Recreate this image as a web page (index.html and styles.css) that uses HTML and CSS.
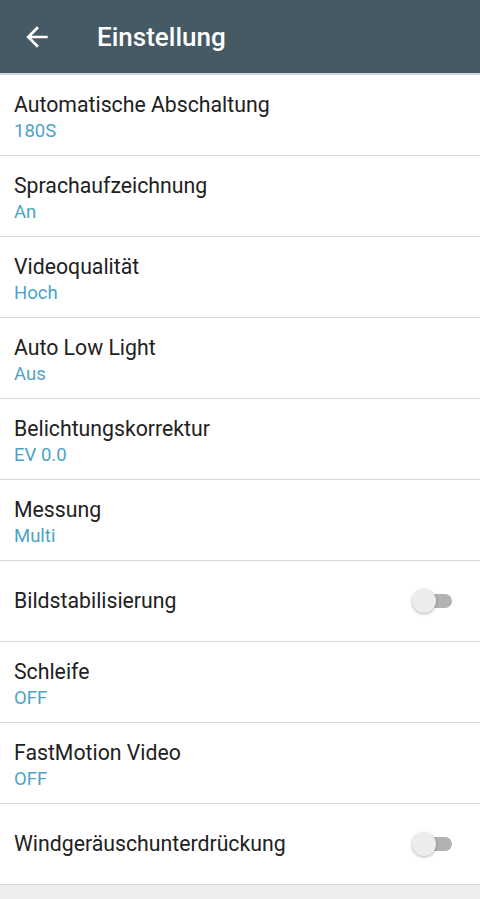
FILE: index.html
```html
<!DOCTYPE html>
<html lang="de">
<head>
  <meta charset="UTF-8" />
  <meta name="viewport" content="width=device-width, initial-scale=1"/>
  <title>Einstellung</title>
  <link rel="stylesheet" href="styles.css">
</head>
<body>

  <!-- Toolbar -->
  <header class="toolbar">
    <svg class="back" viewBox="0 0 24 24" width="32" height="32">
      <path d="M20 11H7.83l5.59-5.59L12 4l-8 8 8 8 1.41-1.41L7.83 13H20v-2z" fill="#fff"/>
    </svg>
    <h1>Einstellung</h1>
  </header>

  <!-- Settings list -->
  <ul class="settings">
    <li class="row">
      <div class="label">
        <span class="title">Automatische Abschaltung</span>
        <span class="value">180S</span>
      </div>
    </li>
    <li class="row">
      <div class="label">
        <span class="title">Sprachaufzeichnung</span>
        <span class="value">An</span>
      </div>
    </li>
    <li class="row">
      <div class="label">
        <span class="title">Videoqualität</span>
        <span class="value">Hoch</span>
      </div>
    </li>
    <li class="row">
      <div class="label">
        <span class="title">Auto Low Light</span>
        <span class="value">Aus</span>
      </div>
    </li>
    <li class="row">
      <div class="label">
        <span class="title">Belichtungskorrektur</span>
        <span class="value">EV 0.0</span>
      </div>
    </li>
    <li class="row">
      <div class="label">
        <span class="title">Messung</span>
        <span class="value">Multi</span>
      </div>
    </li>
    <li class="row">
      <div class="label single">
        <span class="title">Bildstabilisierung</span>
      </div>
      <span class="switch"></span>
    </li>
    <li class="row">
      <div class="label">
        <span class="title">Schleife</span>
        <span class="value">OFF</span>
      </div>
    </li>
    <li class="row">
      <div class="label">
        <span class="title">FastMotion Video</span>
        <span class="value">OFF</span>
      </div>
    </li>
    <li class="row">
      <div class="label single">
        <span class="title">Windgeräuschunterdrückung</span>
      </div>
      <span class="switch"></span>
    </li>
  </ul>

</body>
</html>
```

FILE: styles.css
```css
/* Base */
body {
  margin: 0;
  padding: 0;
  font-family: Roboto, 'Noto Sans', sans-serif;
  background: #eeeeee;
  color: #212121;
}

/* Toolbar */
.toolbar {
  display: flex;
  align-items: center;
  height: 73px;
  padding: 0 0 0 21px;
  background: #455a64;
  border-bottom: 2px solid #d3d3e3;
}

.toolbar .back {
  display: block;
}

.toolbar h1 {
  margin: 0 0 0 44px;
  font-size: 26px;
  font-weight: 500;
  color: #fff;
}

/* Settings list */
.settings {
  list-style: none;
  margin: 0;
  padding: 0;
  background: #fff;
}

.row {
  display: flex;
  align-items: center;
  justify-content: space-between;
  height: 80px;
  padding: 0 28px 0 14px;
  border-bottom: 1px solid #d6d6d6;
}

.label {
  display: flex;
  flex-direction: column;
  padding-top: 4px;
}

.label.single {
  padding-top: 0;
}

.title {
  font-size: 21.25px;
  line-height: 28px;
}

.value {
  font-size: 18.5px;
  line-height: 24px;
  color: #4ba3c8;
}

/* Switch (off) */
.switch {
  position: relative;
  width: 34px;
  height: 14px;
  border-radius: 7px;
  background: #b2b2b2;
}

.switch::before {
  content: '';
  position: absolute;
  left: -6px;
  top: -5px;
  width: 24px;
  height: 24px;
  border-radius: 50%;
  background: #ececec;
  box-shadow: 0 1px 3px rgba(0, 0, 0, 0.3);
}
```
